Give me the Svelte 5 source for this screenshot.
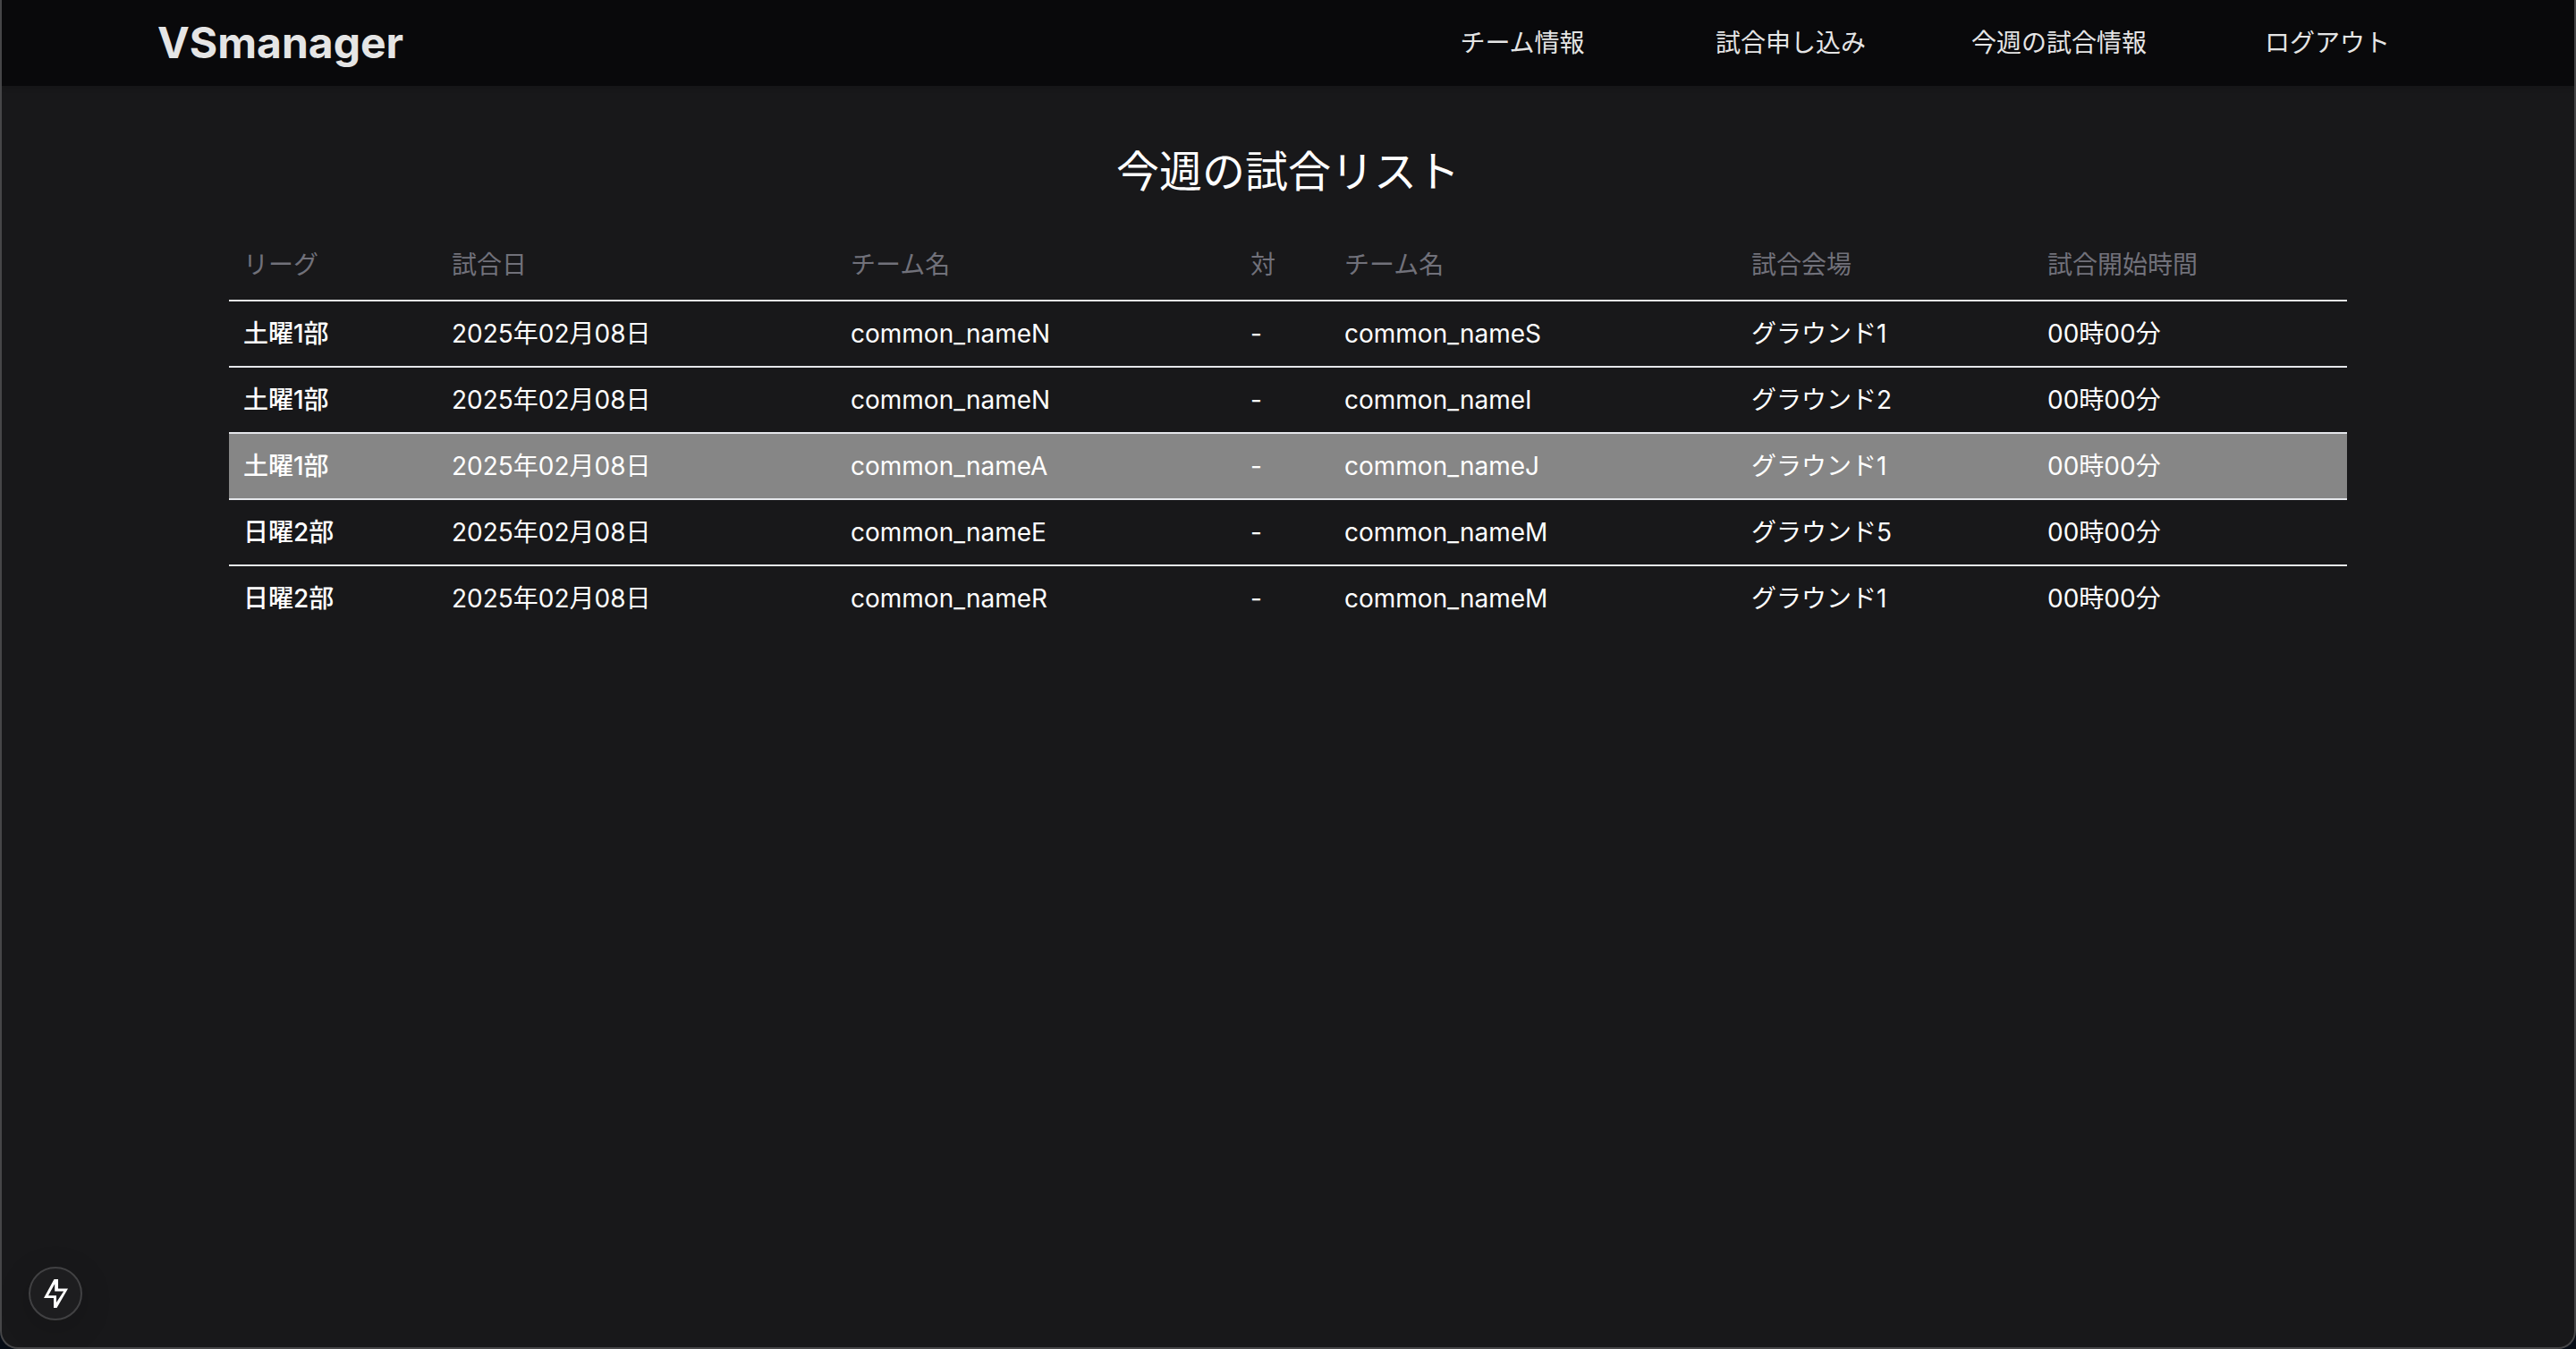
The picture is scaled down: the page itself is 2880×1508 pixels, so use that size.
<script lang="ts">
  const links = ['チーム情報', '試合申し込み', '今週の試合情報', 'ログアウト'];

  const columns = [
    { id: 'league', label: 'リーグ' },
    { id: 'date', label: '試合日' },
    { id: 'home', label: 'チーム名' },
    { id: 'versus', label: '対' },
    { id: 'away', label: 'チーム名' },
    { id: 'venue', label: '試合会場' },
    { id: 'start', label: '試合開始時間' },
  ];

  const matches = [
    { league: '土曜1部', home: 'common_nameN', away: 'common_nameS', venue: 'グラウンド1' },
    { league: '土曜1部', home: 'common_nameN', away: 'common_nameI', venue: 'グラウンド2' },
    { league: '土曜1部', home: 'common_nameA', away: 'common_nameJ', venue: 'グラウンド1', active: true },
    { league: '日曜2部', home: 'common_nameE', away: 'common_nameM', venue: 'グラウンド5' },
    { league: '日曜2部', home: 'common_nameR', away: 'common_nameM', venue: 'グラウンド1' },
  ];
</script>

<div class="frame">
  <header>
    <a class="logo" href="#top">VSmanager</a>
    <nav>
      {#each links as link}
        <a href="#{link}">{link}</a>
      {/each}
    </nav>
  </header>

  <main>
    <h1>今週の試合リスト</h1>
    <table>
      <colgroup>
        {#each columns as column}
          <col class={column.id} />
        {/each}
      </colgroup>
      <thead>
        <tr>
          {#each columns as column}
            <th scope="col">{column.label}</th>
          {/each}
        </tr>
      </thead>
      <tbody>
        {#each matches as match}
          <tr class:active={match.active}>
            <td>{match.league}</td>
            <td>2025年02月08日</td>
            <td>{match.home}</td>
            <td>-</td>
            <td>{match.away}</td>
            <td>{match.venue}</td>
            <td>00時00分</td>
          </tr>
        {/each}
      </tbody>
    </table>
  </main>

  <button class="indicator" type="button" aria-label="Static route">
    <svg viewBox="0 0 16 16" aria-hidden="true">
      <path
        fill-rule="evenodd"
        clip-rule="evenodd"
        d="M8 0H9.5V5.25H15L8.75 16H7V10.5H1.5L7.25 0H8ZM7.6 2.6L4 9.1H8.5V13L12.6 6.7H7.6V2.6Z"
      />
    </svg>
  </button>
</div>

<style>
  :global(body) {
    margin: 0;
    background: #060c16;
  }

  .frame {
    box-sizing: border-box;
    position: relative;
    min-height: 100vh;
    border: 2px solid #464648;
    border-top: 0;
    border-radius: 0 0 20px 20px;
    overflow: hidden;
    background: #18181a;
    color: #fff;
    font-family: Inter, 'Noto Sans CJK JP', sans-serif;
    font-size: 28px;
    line-height: 40px;
  }

  header {
    display: flex;
    align-items: center;
    justify-content: space-between;
    height: 96px;
    padding: 0 126px 0 174px;
    background: #09090b;
    box-shadow: 0 2px 6px rgb(0 0 0 / 10%);
  }

  a {
    color: #e5e5e5;
    text-decoration: none;
  }

  .logo {
    font-size: 48px;
    line-height: 64px;
    font-weight: 700;
  }

  nav {
    flex: 0 1 1200px;
    display: grid;
    grid-template-columns: repeat(4, 1fr);
    text-align: center;
    white-space: nowrap;
  }

  main {
    padding: 64px 254px;
  }

  h1 {
    margin: 0 0 33px;
    font-size: 48px;
    line-height: 64px;
    font-weight: 400;
    text-align: center;
  }

  table {
    width: 100%;
    table-layout: fixed;
    border-collapse: separate;
    border-spacing: 0;
    text-align: left;
  }

  .league { width: 233px; }
  .date { width: 446px; }
  .home { width: 447px; }
  .versus { width: 105px; }
  .away { width: 455px; }
  .venue { width: 331px; }
  .start { width: 351px; }

  th,
  td {
    padding: 16px;
    border-bottom: 2px solid #e5e7eb;
    font-weight: 400;
    white-space: nowrap;
  }

  th {
    padding: 19px 16px;
    color: #71717a;
  }

  td:first-child {
    font-weight: 500;
  }

  tbody tr:last-child td {
    border-bottom: 0;
  }

  .active td {
    background: #868686;
  }

  .indicator {
    position: absolute;
    left: 30px;
    bottom: 30px;
    display: grid;
    place-items: center;
    width: 60px;
    height: 60px;
    padding: 0;
    border: 2px solid #414143;
    border-radius: 50%;
    background: #1d1d1f;
    box-shadow: 0 8px 36px rgb(0 0 0 / 16%);
  }

  .indicator svg {
    width: 32px;
    height: 32px;
    fill: #fff;
  }
</style>
